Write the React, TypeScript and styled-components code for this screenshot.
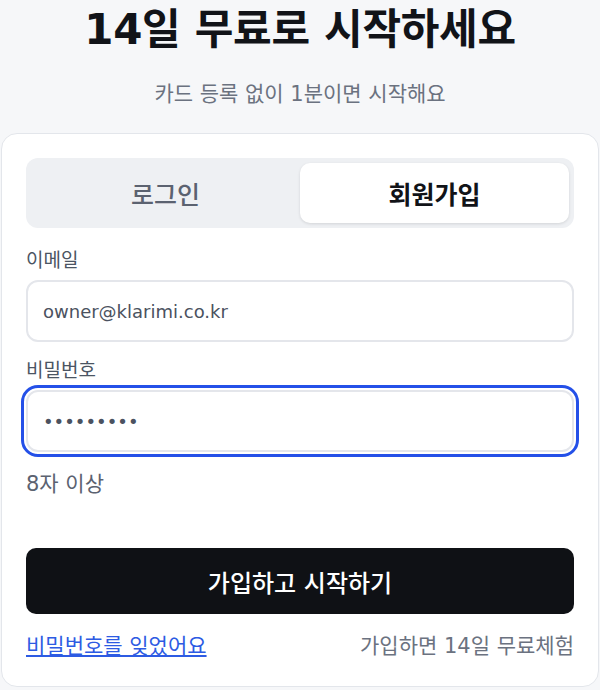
import React from 'react';
import styled, { createGlobalStyle } from 'styled-components';

const GlobalStyle = createGlobalStyle`
  * {
    box-sizing: border-box;
  }
  body {
    margin: 0;
    background: #f6f7f9;
    font-family: 'DejaVu Sans', 'Noto Sans CJK KR', sans-serif;
    color: #111318;
  }
`;

const Page = styled.main`
  display: flex;
  flex-direction: column;
  padding: 0 1px;
`;

const Title = styled.h1`
  margin: 0;
  font-size: 42px;
  font-weight: 700;
  line-height: 60px;
  letter-spacing: -0.3px;
  text-align: center;
  color: #111318;
`;

const Subtitle = styled.p`
  margin: 20px 0 0;
  font-size: 21px;
  line-height: 28px;
  text-align: center;
  color: #6b7280;
`;

const Card = styled.section`
  margin-top: 25px;
  padding: 24px 24px 26px;
  background: #ffffff;
  border: 1px solid #e3e6eb;
  border-radius: 16px;
  display: flex;
  flex-direction: column;
`;

const Tabs = styled.div`
  display: grid;
  grid-template-columns: 1fr 1fr;
  padding: 5px;
  background: #eef0f3;
  border-radius: 12px;
`;

const Tab = styled.button<{ $active?: boolean }>`
  height: 60px;
  border: none;
  border-radius: 10px;
  font-family: inherit;
  font-size: 25px;
  font-weight: ${({ $active }) => ($active ? 700 : 500)};
  color: ${({ $active }) => ($active ? '#111318' : '#5b6270')};
  background: ${({ $active }) => ($active ? '#ffffff' : 'transparent')};
  box-shadow: ${({ $active }) =>
    $active ? '0 1px 3px rgba(17, 19, 24, 0.12)' : 'none'};
  cursor: pointer;
`;

const Field = styled.label<{ $first?: boolean }>`
  display: flex;
  flex-direction: column;
  gap: 8px;
  margin-top: ${({ $first }) => ($first ? '20px' : '16px')};
`;

const Label = styled.span`
  font-size: 19px;
  line-height: 24px;
  color: #4b5563;
`;

const Input = styled.input<{ $focused?: boolean }>`
  height: 62px;
  padding: 0 15px;
  border: 2px solid #e4e6eb;
  border-radius: 12px;
  font-family: inherit;
  font-size: 18px;
  color: #4b5260;
  background: #ffffff;
  outline: ${({ $focused }) => ($focused ? '3px solid #2450e8' : 'none')};
  outline-offset: 2px;
`;

const Hint = styled.p`
  margin: 18px 0 0;
  font-size: 21px;
  line-height: 28px;
  color: #5b6270;
`;

const Submit = styled.button`
  margin-top: 50px;
  height: 66px;
  border: none;
  border-radius: 10px;
  background: #0f1115;
  color: #ffffff;
  font-family: inherit;
  font-size: 24px;
  font-weight: 500;
  cursor: pointer;
`;

const Footer = styled.div`
  margin-top: 18px;
  display: flex;
  justify-content: space-between;
  align-items: center;
  font-size: 21px;
  line-height: 28px;
`;

const Link = styled.a`
  color: #2d5be3;
  text-decoration: underline;
`;

const Note = styled.span`
  color: #6b7280;
`;

export default function App() {
  return (
    <>
      <GlobalStyle />
      <Page>
        <Title>14일 무료로 시작하세요</Title>
        <Subtitle>카드 등록 없이 1분이면 시작해요</Subtitle>
        <Card>
          <Tabs>
            <Tab>로그인</Tab>
            <Tab $active>회원가입</Tab>
          </Tabs>
          <Field $first>
            <Label>이메일</Label>
            <Input type="email" defaultValue="owner@klarimi.co.kr" />
          </Field>
          <Field>
            <Label>비밀번호</Label>
            <Input type="password" defaultValue="123456789" $focused />
          </Field>
          <Hint>8자 이상</Hint>
          <Submit>가입하고 시작하기</Submit>
          <Footer>
            <Link href="#">비밀번호를 잊었어요</Link>
            <Note>가입하면 14일 무료체험</Note>
          </Footer>
        </Card>
      </Page>
    </>
  );
}
